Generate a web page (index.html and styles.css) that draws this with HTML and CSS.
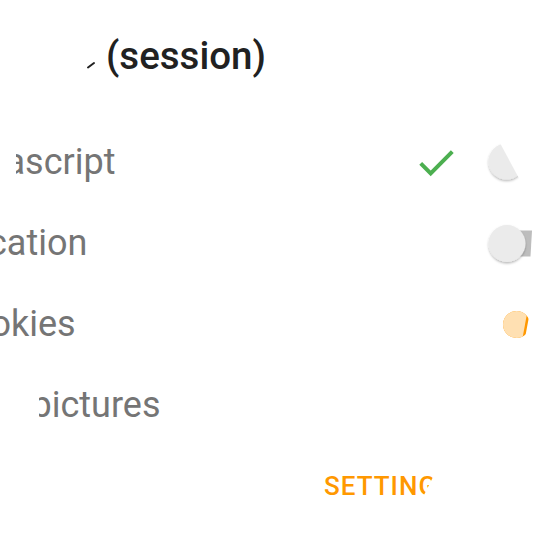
FILE: index.html
```html
<!DOCTYPE html>
<html>
<head>
<meta charset="utf-8">
<link rel="stylesheet" href="styles.css">
</head>
<body>
<div class="dialog">
  <div class="title-row">
    <svg class="frag" width="10" height="52" viewBox="0 0 10 52"><path d="M2 37.5 L8 33" stroke="#212121" stroke-width="2" stroke-linecap="round"/></svg>
    <h1 class="title">(session)</h1>
  </div>
  <ul class="list">
    <li class="row">
      <div class="clip clip-js"><span class="label">ascript</span></div>
      <svg class="check" width="40" height="81" viewBox="0 0 40 81"><path d="M4.7 41.3 L14.7 51.3 L36.3 29.7" fill="none" stroke="#4CAF50" stroke-width="4"/></svg>
      <svg class="toggle toggle-first" width="54" height="81" viewBox="0 0 54 81">
        <defs>
          <filter id="sh1" x="-50%" y="-50%" width="200%" height="200%"><feDropShadow dx="0" dy="1.5" stdDeviation="1.3" flood-color="#000" flood-opacity="0.28"/></filter>
          <clipPath id="c1"><polygon points="0,0 8.6,0 52.4,81 0,81"/></clipPath>
        </defs>
        <g clip-path="url(#c1)"><circle cx="26.5" cy="39.5" r="18" fill="#ebebeb" filter="url(#sh1)"/></g>
      </svg>
    </li>
    <li class="row">
      <div class="clip clip-loc"><span class="label">cation</span></div>
      <svg class="toggle" width="54" height="81" viewBox="0 0 54 81">
        <defs>
          <filter id="sh2" x="-50%" y="-50%" width="200%" height="200%"><feDropShadow dx="0" dy="1.5" stdDeviation="1.3" flood-color="#000" flood-opacity="0.28"/></filter>
        </defs>
        <polygon points="20,27.5 52,27.5 50.5,53.5 20,53.5" fill="#bdbdbd"/>
        <circle cx="27" cy="40.5" r="18.5" fill="#ebebeb" filter="url(#sh2)"/>
      </svg>
    </li>
    <li class="row">
      <div class="clip clip-cook"><span class="label">okies</span></div>
      <svg class="toggle" width="54" height="81" viewBox="0 0 54 81">
        <defs>
          <clipPath id="c3a"><polygon points="0,0 55,0 40,81 0,81"/></clipPath>
          <clipPath id="c3b"><polygon points="0,0 52.5,0 37.5,81 0,81"/></clipPath>
        </defs>
        <circle cx="36.5" cy="40.5" r="13.5" fill="#FF9800" clip-path="url(#c3a)"/>
        <circle cx="36.5" cy="40.5" r="13.5" fill="#FFE0B2" clip-path="url(#c3b)"/>
      </svg>
    </li>
    <li class="row">
      <div class="clip clip-pic"><span class="label">pictures</span></div>
    </li>
  </ul>
  <div class="actions"><span class="btn">SETTINGS</span></div>
</div>
</body>
</html>
```

FILE: styles.css
```css
html, body {
  margin: 0;
  padding: 0;
  background: #ffffff;
}
body {
  width: 534px;
  height: 534px;
  overflow: hidden;
  font-family: Roboto, "Noto Sans", sans-serif;
}
.title-row {
  display: flex;
  align-items: center;
  height: 52px;
  padding-top: 30px;
}
.frag {
  margin-left: 86px;
  flex: none;
}
.title {
  margin: 0 0 0 10px;
  font-size: 38.5px;
  font-weight: 500;
  line-height: 52px;
  color: #212121;
  white-space: nowrap;
}
.list {
  list-style: none;
  margin: 40px 0 0;
  padding: 0;
}
.row {
  display: flex;
  align-items: center;
  height: 81px;
}
.clip {
  overflow: hidden;
  white-space: nowrap;
  font-size: 36px;
  line-height: 81px;
  color: #757575;
  flex: none;
}
.label {
  display: inline-block;
}
.clip-js { margin-left: 16px; }
.clip-js .label { margin-left: -10.5px; }
.clip-loc .label { margin-left: -12px; }
.clip-cook .label { margin-left: -9.5px; }
.clip-pic { margin-left: 39px; }
.clip-pic .label { margin-left: -7.5px; }
.check {
  margin-left: auto;
  flex: none;
}
.toggle {
  margin-left: auto;
  flex: none;
}
.toggle-first {
  margin-left: 24px;
}
.actions {
  display: flex;
  align-items: center;
  height: 40px;
  margin-top: 20px;
  padding-left: 324px;
}
.btn {
  font-size: 26px;
  font-weight: 500;
  letter-spacing: 1px;
  line-height: 30px;
  color: #FF9800;
  white-space: nowrap;
  clip-path: polygon(0 0, 112px 0, 97px 100%, 0 100%);
}
```
